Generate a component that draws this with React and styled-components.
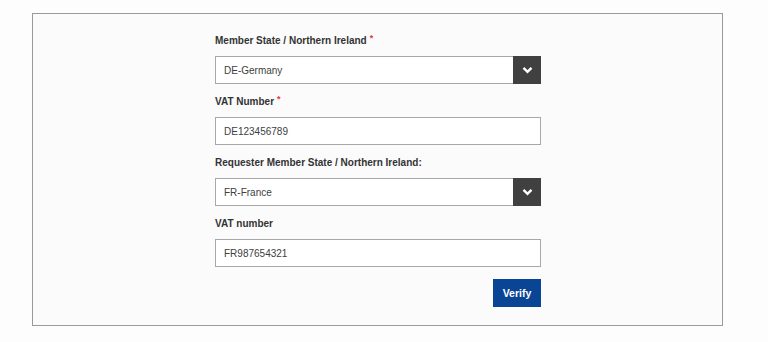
import React from 'react';
import styled, { createGlobalStyle } from 'styled-components';

const GlobalStyle = createGlobalStyle`
  html, body {
    margin: 0;
    padding: 0;
    background: #fdfdfd;
    font-family: "Liberation Sans", Arial, sans-serif;
  }
`;

const Page = styled.div`
  padding: 13px 45px 16px 32px;
`;

const Frame = styled.div`
  border: 1px solid #9a9a9a;
  background: #fbfbfb;
  height: 313px;
  box-sizing: border-box;
  display: flex;
  justify-content: center;
  padding: 19px 0 0 0;
`;

const Form = styled.form`
  width: 326px;
  margin-left: 1px;
  display: flex;
  flex-direction: column;
`;

const Group = styled.div`
  display: flex;
  flex-direction: column;
  margin-bottom: ${p => (p.$last ? 12 : 10)}px;
`;

const Label = styled.label`
  font-size: 10px;
  font-weight: bold;
  color: #333;
  line-height: 16px;
  margin-bottom: 7px;
`;

const Required = styled.span`
  color: #e0383e;
  font-size: 9px;
  vertical-align: top;
  margin-left: 3px;
  line-height: 10px;
`;

const Field = styled.div`
  height: 28px;
  box-sizing: border-box;
  border: 1px solid #a8a8a8;
  background: #fff;
  display: flex;
  align-items: center;
`;

const Value = styled.span`
  flex: 1;
  padding-left: 8px;
  font-size: 10px;
  color: #404040;
`;

const Toggle = styled.span`
  width: 28px;
  height: 28px;
  margin: -1px -1px -1px 0;
  background: #404040;
  display: flex;
  align-items: center;
  justify-content: center;
`;

const Actions = styled.div`
  display: flex;
  justify-content: flex-end;
`;

const Button = styled.button`
  width: 48px;
  height: 28px;
  border: none;
  background: #0a4595;
  color: #fff;
  font-family: inherit;
  font-weight: bold;
  font-size: 10.5px;
  padding: 0;
`;

const Chevron = () => (
  <svg width="11" height="8" viewBox="0 0 11 8">
    <path d="M1.5 1.8 L5.5 5.8 L9.5 1.8" fill="none" stroke="#fff" strokeWidth="2.4" />
  </svg>
);

const Select = ({ value }) => (
  <Field>
    <Value>{value}</Value>
    <Toggle><Chevron /></Toggle>
  </Field>
);

const Input = ({ value }) => (
  <Field>
    <Value>{value}</Value>
  </Field>
);

export default function App() {
  return (
    <>
      <GlobalStyle />
      <Page>
        <Frame>
          <Form onSubmit={e => e.preventDefault()}>
            <Group>
              <Label>Member State / Northern Ireland<Required>*</Required></Label>
              <Select value="DE-Germany" />
            </Group>
            <Group>
              <Label>VAT Number<Required>*</Required></Label>
              <Input value="DE123456789" />
            </Group>
            <Group>
              <Label>Requester Member State / Northern Ireland:</Label>
              <Select value="FR-France" />
            </Group>
            <Group $last>
              <Label>VAT number</Label>
              <Input value="FR987654321" />
            </Group>
            <Actions>
              <Button type="submit">Verify</Button>
            </Actions>
          </Form>
        </Frame>
      </Page>
    </>
  );
}
